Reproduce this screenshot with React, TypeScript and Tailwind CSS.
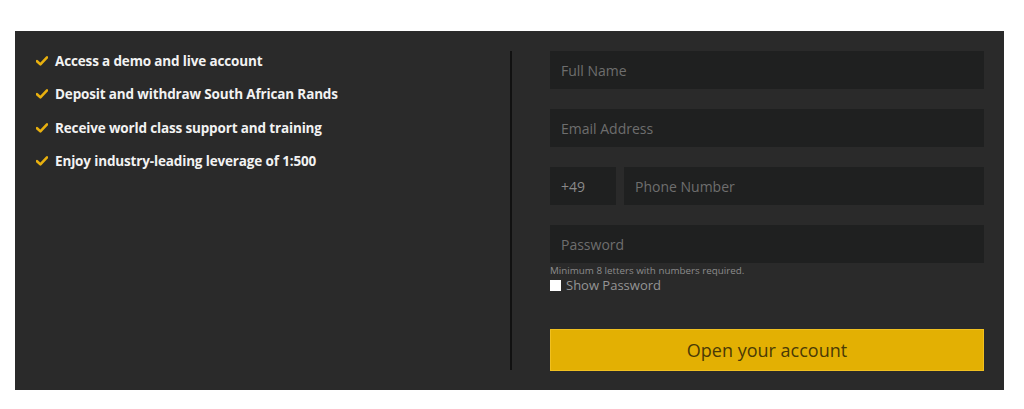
import React from "react";

const items = [
  "Access a demo and live account",
  "Deposit and withdraw South African Rands",
  "Receive world class support and training",
  "Enjoy industry-leading leverage of 1:500",
];

function Check() {
  return (
    <svg width="12" height="10" viewBox="0 0 12 10" className="shrink-0">
      <path d="M1 5.2 L4.4 8.4 L11 1.4" fill="none" stroke="#e8b00f" strokeWidth="2.6" strokeLinecap="round" strokeLinejoin="round" />
    </svg>
  );
}

function Field({ placeholder, className = "" }: { placeholder: string; className?: string }) {
  return (
    <input
      placeholder={placeholder}
      className={`h-[38px] bg-[#1f2020] px-[11px] text-[14px] text-[#cfcfcf] placeholder:text-[#6e6e6e] outline-none ${className}`}
    />
  );
}

export default function App() {
  return (
    <div className="bg-white w-[1024px] h-[409px] pt-[31px] pl-[15px]" style={{ fontFamily: '"Open Sans", "DejaVu Sans", sans-serif' }}>
      <div className="w-[989px] h-[359px] bg-[#2a2a2a] flex items-start">
        <div className="w-[495px] pt-[13px] pl-[21px]">
          <ul>
            {items.map((t) => (
              <li key={t} className="h-[33.5px] flex items-center gap-[7px] text-[13.5px] font-bold text-[#f2f2f2] tracking-[-0.15px]">
                <Check />
                <span>{t}</span>
              </li>
            ))}
          </ul>
        </div>
        <div className="mt-[20px] h-[319px] w-[2px] bg-[#111]" />
        <div className="pt-[20px] pl-[38px] w-[472px] flex flex-col">
          <Field placeholder="Full Name" className="w-full" />
          <Field placeholder="Email Address" className="w-full mt-[20px]" />
          <div className="flex gap-[8px] mt-[20px]">
            <div className="w-[66px] h-[38px] bg-[#1f2020] px-[11px] flex items-center text-[14px] text-[#8a8a8a]">+49</div>
            <Field placeholder="Phone Number" className="flex-1 min-w-0" />
          </div>
          <Field placeholder="Password" className="w-full mt-[20px]" />
          <div className="mt-[1px] text-[9.8px] leading-[13px] text-[#8c8c8c]">Minimum 8 letters with numbers required.</div>
          <label className="flex items-center gap-[5px] text-[13px] leading-[16px] text-[#959595]">
            <span className="w-[11px] h-[11px] bg-white inline-block" />
            Show Password
          </label>
          <button className="mt-[36px] h-[42px] w-full bg-[#e3b003] border border-[#f0c020] text-[18px] text-[#4a3a06]">
            Open your account
          </button>
        </div>
      </div>
    </div>
  );
}
